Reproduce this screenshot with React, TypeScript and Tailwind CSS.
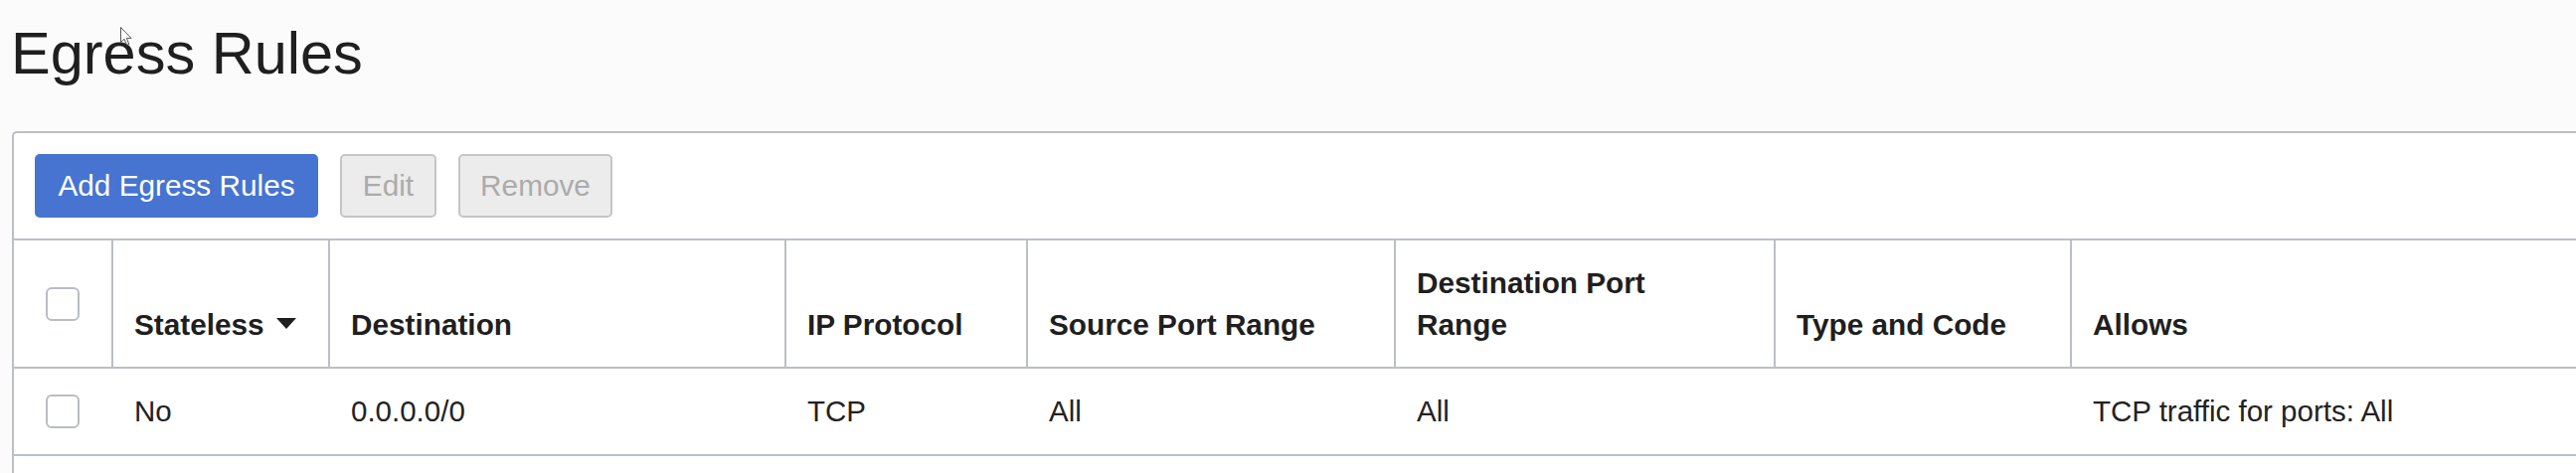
import React from "react";

function Checkbox() {
  return (
    <span className="mx-auto block h-[34px] w-[34px] rounded-[6px] border-2 border-[#b9bdc2] bg-white" />
  );
}

function SortDown() {
  return (
    <svg
      className="ml-[12px] inline-block align-[6px]"
      width="20"
      height="11"
      viewBox="0 0 20 11"
    >
      <path d="M0 0 H20 L10 11 Z" fill="#1f1f1f" />
    </svg>
  );
}

function Cursor() {
  return (
    <svg
      className="pointer-events-none absolute left-[121px] top-[27px]"
      width="13"
      height="20"
      viewBox="0 0 13 20"
    >
      <path
        d="M0.5 0.5 L0.5 15.5 L4 12.2 L6.6 18.3 L8.8 17.4 L6.3 11.4 L11 11.4 Z"
        fill="#ffffff"
        stroke="#555"
        strokeWidth="1"
        strokeLinejoin="round"
      />
    </svg>
  );
}

const th =
  "border-t-2 border-b-2 border-l-2 border-[#bcbfc4] pl-[21px] pr-[21px] pt-[22px] pb-[21px] text-left align-bottom text-[29.75px] font-bold leading-[42px] text-[#1f1f1f]";
const td =
  "border-b-2 border-[#bcbfc4] pl-[23px] pr-[21px] py-[22px] text-left align-middle text-[29.5px] font-normal leading-[42px] text-[#222] whitespace-nowrap";

export default function App() {
  return (
    <div className="relative h-[476px] w-full overflow-hidden bg-[#fbfbfb] font-['Liberation_Sans',Arial,Helvetica,sans-serif] text-[#222]">
      <h1 className="pl-[11px] pt-[21px] text-[59.5px] font-normal leading-[66px] text-[#1f1f1f]">
        Egress Rules
      </h1>
      <Cursor />
      <section className="ml-[12px] mt-[45px] rounded-tl-[5px] border-l-2 border-t-2 border-[#bcbfc4] bg-white pb-[40px]">
        <div className="flex items-center gap-[22px] px-[21px] py-[21px]">
          <button className="flex h-[64px] w-[285px] items-center justify-center rounded-[5px] bg-[#4674d0] text-[29.75px] leading-none text-white">
            Add Egress Rules
          </button>
          <button className="flex h-[64px] w-[97px] items-center justify-center rounded-[5px] border-2 border-[#c3c5c8] bg-[#ececec] text-[29.75px] leading-none text-[#ababab]">
            Edit
          </button>
          <button className="flex h-[64px] w-[155px] items-center justify-center rounded-[5px] border-2 border-[#c3c5c8] bg-[#ececec] text-[29.75px] leading-none text-[#ababab]">
            Remove
          </button>
        </div>
        <table className="w-full table-fixed border-separate border-spacing-0">
          <colgroup>
            <col className="w-[98px]" />
            <col className="w-[218px]" />
            <col className="w-[459px]" />
            <col className="w-[243px]" />
            <col className="w-[370px]" />
            <col className="w-[382px]" />
            <col className="w-[298px]" />
            <col />
          </colgroup>
          <thead>
            <tr>
              <th className="border-t-2 border-b-2 border-[#bcbfc4] p-0 align-middle">
                <Checkbox />
              </th>
              <th className={th}>
                Stateless
                <SortDown />
              </th>
              <th className={th}>Destination</th>
              <th className={th}>IP Protocol</th>
              <th className={th}>Source Port Range</th>
              <th className={th}>
                Destination Port
                <br />
                Range
              </th>
              <th className={th}>Type and Code</th>
              <th className={th}>Allows</th>
            </tr>
          </thead>
          <tbody>
            <tr>
              <td className="border-b-2 border-[#bcbfc4] p-0 align-middle">
                <Checkbox />
              </td>
              <td className={td}>No</td>
              <td className={td}>0.0.0.0/0</td>
              <td className={td}>TCP</td>
              <td className={td}>All</td>
              <td className={td}>All</td>
              <td className={td}></td>
              <td className={td}>TCP traffic for ports: All</td>
            </tr>
          </tbody>
        </table>
      </section>
    </div>
  );
}
